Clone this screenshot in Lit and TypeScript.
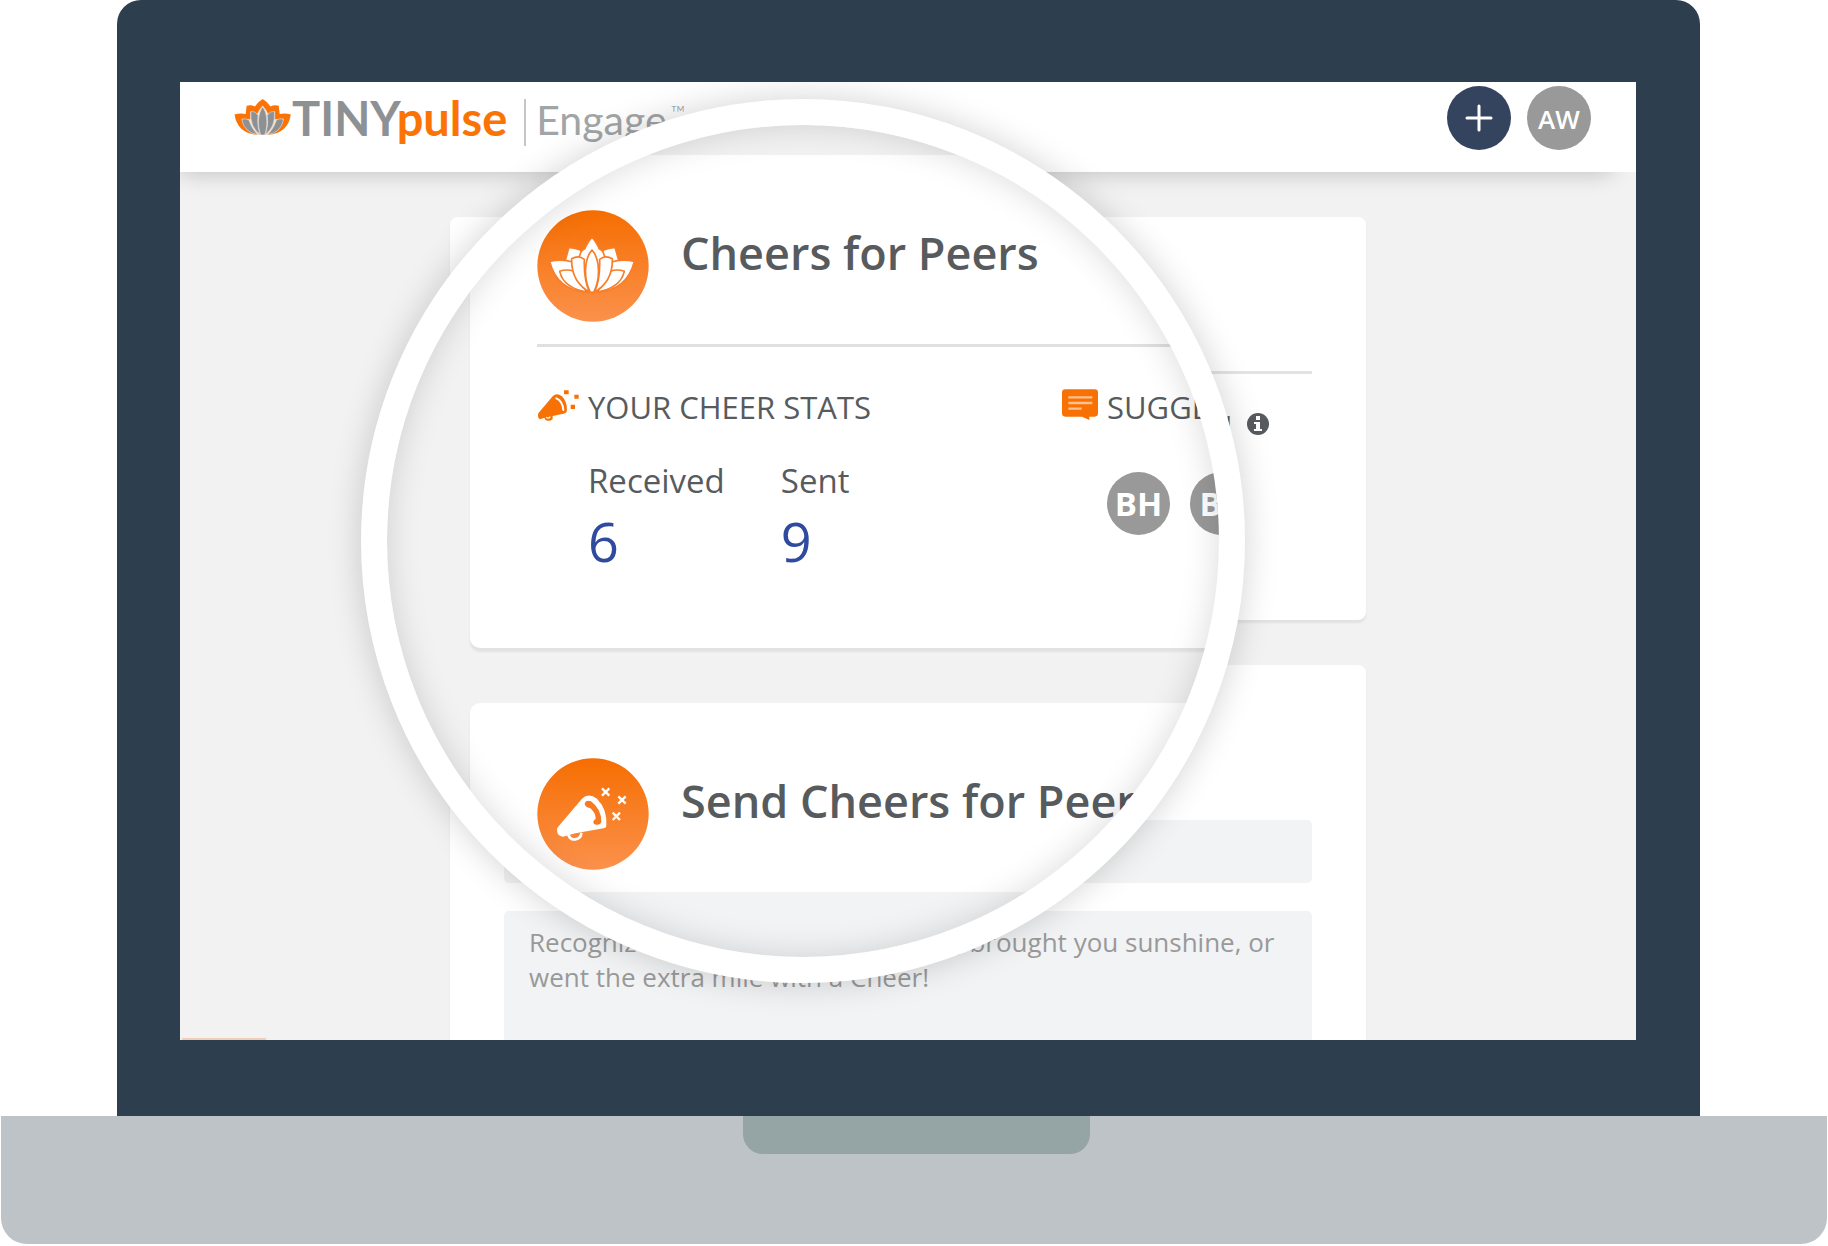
import { LitElement, html, svg, css } from "lit";
import { customElement } from "lit/decorators.js";

const lotusHalf = svg`
  <path d="M104 184 L116 142 Q135 143 152 151 L152 190 Z" />
  <path d="M58 184 Q95 176 127 186 L134 220 L168 276 Q80 270 58 184 Z" />
  <path d="M88 214 Q110 206 130 214 Q142 250 172 276 Q100 265 88 214 Z" />`;
const lotusMid = svg`<path d="M124 176 Q145 164 162 178 Q160 240 178 276 Q122 245 124 176 Z" />`;

const lotusBadge = svg`
  <svg class="badge" viewBox="20 30 336 336" aria-hidden="true">
    <defs>
      <linearGradient id="g" x1="0" y1="0" x2="0" y2="1">
        <stop offset="0" stop-color="#f66e02" /><stop offset="1" stop-color="#fb914c" />
      </linearGradient>
    </defs>
    <circle cx="188" cy="198" r="167" fill="url(#g)" />
    <g fill="#fff" stroke="#f87d28" stroke-width="5" stroke-linejoin="round">
      ${lotusHalf}<g transform="translate(370 0) scale(-1 1)">${lotusHalf}</g>
      <path d="M146 176 Q150 150 163 147 Q174 122 185 112 Q196 122 207 147 Q220 150 224 176 L185 240 Z" />
      ${lotusMid}<g transform="translate(370 0) scale(-1 1)">${lotusMid}</g>
      <path d="M185 150 C160 178 160 240 180 277 L190 277 C210 240 210 178 185 150 Z" />
    </g>
  </svg>`;

const cheerBadge = svg`
  <svg class="badge" viewBox="20 21 336 336" aria-hidden="true">
    <defs>
      <linearGradient id="h" x1="0" y1="0" x2="0" y2="1">
        <stop offset="0" stop-color="#f66e02" /><stop offset="1" stop-color="#fb914c" />
      </linearGradient>
    </defs>
    <circle cx="188" cy="189" r="167" fill="url(#h)" />
    <path d="M113 248 Q118 268 135 265 Q153 262 153 245" fill="none" stroke="#fff" stroke-width="8" />
    <path d="M155 143 Q174 124 200 143 Q232 176 228 224 Q228 231 220 232 L135 247 L98 257 Q80 255 80 237 Q80 230 88 222 Z" fill="#fff" />
    <path d="M163 157 Q166 145 182 151 Q213 174 213 212 Q211 221 200 221 Q190 222 189 213 Q190 206 196 204 Q196 184 179 171 Q164 170 163 157 Z" fill="#f77a22" />
    <path d="M215 112l22 22m0-22l-22 22M264 136l22 22m0-22l-22 22M247 185l22 22m0-22l-22 22" stroke="#fff" stroke-width="7" />
  </svg>`;

const cheerSmall = svg`
  <svg class="icon-cheer" viewBox="45 57 126 102" aria-hidden="true">
    <g fill="#f87104">
      <path d="M92 82 Q104 70 120 82 Q138 102 134 128 Q132 133 124 134 L92 141 L92 150 Q82 160 70 152 L67 146 L54 151 Q45 146 49 133 Z" />
      <path d="M126 64h14v12h-14zM157 77h13v12h-13zM146 107h13v13h-13z" />
    </g>
    <path d="M103 88 Q122 96 124 123" fill="none" stroke="#fff" stroke-width="6" stroke-linecap="round" />
    <path d="M73 145 Q79 151 85 143" fill="none" stroke="#fff" stroke-width="4" />
  </svg>`;

const bubble = svg`
  <svg class="icon-bubble" viewBox="123 119 108 93" aria-hidden="true">
    <path d="M133 120h88q10 0 10 10v62q0 10-10 10h-16v10l-22-10h-50q-10 0-10-10v-62q0-10 10-10z" fill="#f87104" />
    <path d="M142 144h72M142 161h72M142 178h40" stroke="#fdc08f" stroke-width="7" />
  </svg>`;

const logoHalf = svg`
  <path d="M48 86 Q60 82 70 88 Q80 118 98 133 Q56 128 48 86 Z" />
  <path d="M76 62 Q90 60 98 74 Q94 108 105 133 Q72 110 76 62 Z" />`;

const logoMark = svg`
  <svg class="mark" viewBox="26 24 174 110" aria-hidden="true">
    <path fill="#fb7305" d="M26 71 Q44 66 60 70 L63 45 Q76 40 88 47 Q98 32 112 24 Q126 32 136 47 Q148 40 161 45 L164 70 Q180 66 198 71 Q190 126 132 133 L92 133 Q34 126 26 71 Z" />
    <path fill="#fde3cf" d="M112 44 Q100 58 96 68 L74 62 L74 86 L48 84 Q56 126 100 134 L124 134 Q168 126 176 84 L150 86 L150 62 L128 68 Q124 58 112 44 Z" />
    <g fill="#8e9193" stroke="#dcdcdc" stroke-width="2">
      ${logoHalf}<g transform="translate(224 0) scale(-1 1)">${logoHalf}</g>
      <path d="M112 48 C96 70 96 108 106 134 L118 134 C128 108 128 70 112 48 Z" />
    </g>
  </svg>`;

const info = svg`
  <svg class="icon-info" viewBox="0 0 22 22" aria-hidden="true">
    <circle cx="11" cy="11" r="11" fill="#585b5e" />
    <path d="M9 3h4v4H9zM7 9h6v7h2v2H7v-2h2v-5H7z" fill="#fff" />
  </svg>`;

@customElement("magnifier-lens")
class MagnifierLens extends LitElement {
  static styles = css`
    :host {
      position: absolute;
      top: 17px;
      left: calc(50% - 547px);
      width: 884px;
      height: 884px;
      box-sizing: border-box;
      border: 26px solid #fff;
      border-radius: 50%;
      overflow: hidden;
      background: #f2f2f2;
      box-shadow: 0 0 34px rgba(0, 0, 0, 0.18);
    }
    :host::after {
      content: "";
      position: absolute;
      inset: 0;
      border-radius: 50%;
      box-shadow: inset 0 0 34px rgba(0, 0, 0, 0.15);
      pointer-events: none;
    }
    .view {
      display: flex;
      flex-direction: column;
      gap: 55px;
      padding: 30px 0 0 83px;
      width: 1070px;
      box-sizing: border-box;
    }
    .card {
      background: #fff;
      border-radius: 10px;
      box-shadow: 0 4px 2px #e2e2e2;
      padding: 55px 67px 0;
    }
    .head {
      display: flex;
      gap: 32px;
      padding-bottom: 22px;
    }
    .ruled {
      border-bottom: 3px solid #e0e0e0;
    }
    .badge {
      width: 112px;
      height: 112px;
      flex: none;
    }
    h2 {
      margin: 10px 0 0;
      font-size: 45px;
      line-height: 66px;
      font-weight: 600;
      white-space: nowrap;
    }
    .columns {
      display: grid;
      grid-template-columns: 525px 1fr;
      padding-top: 38px;
    }
    h3 {
      display: flex;
      align-items: center;
      height: 44px;
      margin: 0;
      font-size: 31px;
      font-weight: 400;
      line-height: 44px;
    }
    .icon-cheer {
      width: 42px;
      height: 34px;
      margin-right: 9px;
      margin-bottom: 4px;
    }
    .icon-bubble {
      width: 36px;
      height: 31px;
      margin-right: 9px;
      margin-bottom: 6px;
    }
    dl {
      display: flex;
      gap: 56px;
      margin: 0;
      padding: 28px 0 71px 51px;
    }
    dt {
      font-size: 33px;
      line-height: 48px;
    }
    dd {
      margin: 0;
      font-size: 54px;
      line-height: 72px;
      color: #2f4a9f;
    }
    .people {
      display: flex;
      gap: 20px;
      padding: 43px 0 0 45px;
    }
    .person {
      width: 63px;
      height: 63px;
      border-radius: 50%;
      background: #999;
      color: #fff;
      font-size: 33px;
      font-weight: 700;
      line-height: 64px;
      text-align: center;
    }
    .field {
      display: block;
      width: 100%;
      height: 100px;
      border: 0;
      border-radius: 6px;
      background: #f1f3f4;
    }
  `;
  render() {
    return html`
      <div class="view">
        <section class="card">
          <div class="head ruled">${lotusBadge}<h2>Cheers for Peers</h2></div>
          <div class="columns">
            <div>
              <h3>${cheerSmall}YOUR CHEER STATS</h3>
              <dl>
                <div><dt>Received</dt><dd>6</dd></div>
                <div><dt>Sent</dt><dd>9</dd></div>
              </dl>
            </div>
            <div>
              <h3>${bubble}SUGGESTION</h3>
              <div class="people">
                <span class="person">BH</span>
                <span class="person">BR</span>
              </div>
            </div>
          </div>
        </section>
        <section class="card">
          <div class="head">${cheerBadge}<h2>Send Cheers for Peers</h2></div>
          <input class="field" aria-label="Peer" />
        </section>
      </div>
    `;
  }
}

@customElement("app-root")
class AppRoot extends LitElement {
  static styles = css`
    :host {
      display: block;
      background: #fff;
      color: #585b5e;
      font-family: "Open Sans", "Noto Sans", sans-serif;
    }
    .lid {
      margin: 0 128px 0 117px;
      padding: 82px 64px 76px 63px;
      background: #2d3e4f;
      border-radius: 24px 24px 0 0;
    }
    .screen {
      position: relative;
      overflow: hidden;
      background: #f2f2f2;
    }
    .bar {
      display: flex;
      align-items: flex-start;
      gap: 16px;
      height: 90px;
      box-sizing: border-box;
      padding: 4px 45px 0 54px;
      background: #fff;
      box-shadow: -12px 14px 22px -12px rgba(0, 0, 0, 0.2);
    }
    .brand {
      display: flex;
      align-items: flex-start;
      margin-right: auto;
      padding-top: 13px;
      font-family: Lato, sans-serif;
      color: #8e9193;
      text-decoration: none;
    }
    .mark {
      width: 58px;
      height: 36px;
    }
    .name {
      font-size: 47px;
      font-weight: 700;
      line-height: 38px;
    }
    .pulse {
      color: #fb7305;
    }
    .product {
      margin-left: 17px;
      padding-left: 10px;
      border-left: 2px solid #c4c6c8;
      height: 47px;
      font-size: 41px;
      font-weight: 400;
      line-height: 42px;
      color: #a2a5a7;
    }
    .tm {
      font-size: 20px;
      font-weight: 300;
      line-height: 26px;
      padding-left: 4px;
    }
    .round {
      width: 64px;
      height: 64px;
      padding: 0;
      border: 0;
      border-radius: 50%;
      background: #999;
      color: #fff;
      font: 600 26px/66px "Open Sans", sans-serif;
    }
    .add {
      display: flex;
      align-items: center;
      justify-content: center;
      background: #34435e;
    }
    .plus {
      width: 28px;
      height: 28px;
    }
    .feed {
      display: flex;
      flex-direction: column;
      gap: 45px;
      max-width: 916px;
      margin: 0 auto;
      padding-top: 45px;
    }
    .card {
      background: #fff;
      border-radius: 8px;
      box-shadow: 0 3px 2px #e2e2e2;
      padding: 154px 54px 0;
    }
    .suggest {
      display: flex;
      align-items: center;
      justify-content: flex-end;
      gap: 15px;
      border-top: 3px solid #e3e3e3;
      padding: 32px 43px 178px;
      font-size: 26px;
      line-height: 36px;
    }
    .icon-info {
      width: 22px;
      height: 22px;
    }
    .compose {
      display: flex;
      flex-direction: column;
      gap: 28px;
      padding-top: 155px;
      border-radius: 8px 8px 0 0;
    }
    .field {
      display: block;
      width: 100%;
      height: 63px;
      box-sizing: border-box;
      border: 0;
      border-radius: 5px;
      background: #f1f3f4;
      padding: 14px 25px 0;
      font: 400 26px/35px "Open Sans", sans-serif;
      resize: none;
    }
    .field::placeholder {
      color: #999;
      opacity: 1;
    }
    .message {
      height: 129px;
      border-radius: 5px 5px 0 0;
    }
    .tab {
      position: absolute;
      left: 2px;
      bottom: 0;
      width: 84px;
      height: 2px;
      background: #f0cdb8;
    }
    .base {
      height: 128px;
      box-sizing: border-box;
      margin: 0 1px 2px;
      padding-left: 5px;
      background: #bdc3c7;
      border-radius: 0 0 26px 26px;
    }
    .notch {
      width: 347px;
      height: 38px;
      margin: 0 auto;
      background: #95a5a5;
      border-radius: 0 0 20px 20px;
    }
  `;
  render() {
    return html`
      <div class="lid">
        <main class="screen">
          <header class="bar">
            <a class="brand" href="#">
              ${logoMark}
              <span class="name">TINY<span class="pulse">pulse</span></span>
              <span class="product">Engage</span><span class="tm">™</span>
            </a>
            <button class="round add" aria-label="Add">
              <svg class="plus" viewBox="0 0 28 28"><path d="M14 2v24M2 14h24" stroke="#fff" stroke-width="3" stroke-linecap="round" /></svg>
            </button>
            <button class="round">AW</button>
          </header>
          <div class="feed">
            <section class="card">
              <div class="suggest">SUGGESTION ${info}</div>
            </section>
            <section class="card compose">
              <input class="field" aria-label="Recipient" />
              <textarea
                class="field message"
                aria-label="Message"
                placeholder="Recognize someone who pitched in, brought you sunshine, or went the extra mile with a Cheer!"
              ></textarea>
            </section>
          </div>
          <div class="tab"></div>
          <magnifier-lens></magnifier-lens>
        </main>
      </div>
      <div class="base"><div class="notch"></div></div>
    `;
  }
}
